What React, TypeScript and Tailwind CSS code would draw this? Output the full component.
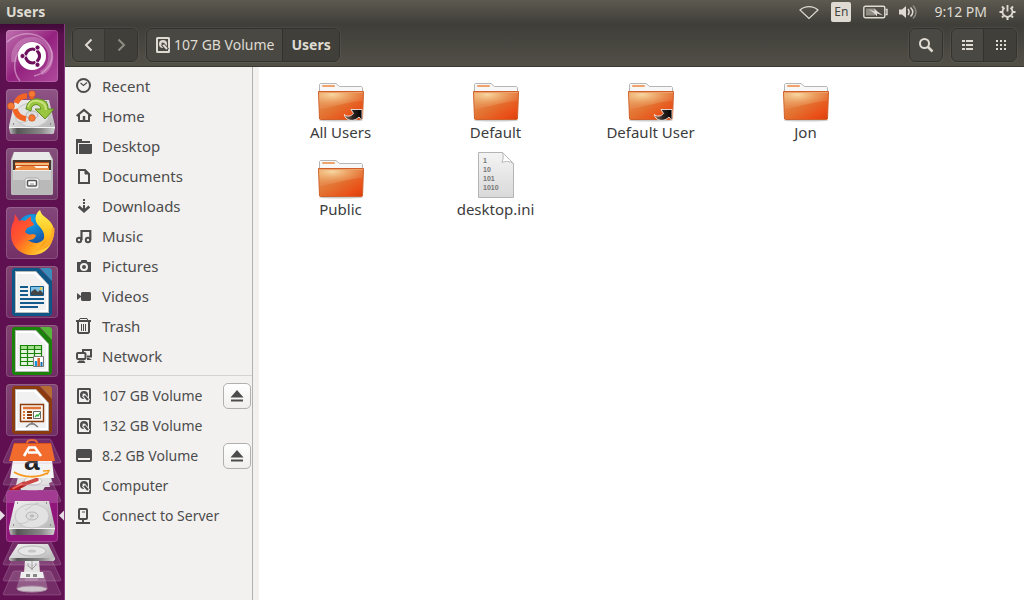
import type { ReactNode } from 'react'

interface IconProps {
  children: ReactNode
  className?: string
}

// 16px symbolic icon, inherits the text colour
function Symbolic({ children, className = 'h-4 w-4' }: IconProps) {
  return (
    <svg viewBox="0 0 16 16" fill="none" stroke="currentColor" strokeWidth="2" className={`shrink-0 ${className}`} aria-hidden="true">
      {children}
    </svg>
  )
}

function DriveIcon({ background }: { background: string }) {
  return (
    <Symbolic>
      <rect x="2" y="1" width="12" height="14" rx=".5" />
      <circle cx="8" cy="7" r="4" fill="currentColor" stroke="none" />
      <path d="M7.500 7l5 6" stroke={background} strokeWidth="4" />
      <path d="M8 7.500l4 4.500" strokeWidth="2" />
      <circle cx="7.700" cy="6.800" r="1.200" fill={background} stroke="none" />
    </Symbolic>
  )
}

const places = [
  {
    label: 'Recent',
    icon: (
      <Symbolic>
        <circle cx="7.500" cy="7.500" r="6.500" />
        <path d="M4.500 5l3 2.500L11 4.500" strokeWidth="1.200" />
      </Symbolic>
    ),
  },
  {
    label: 'Home',
    icon: (
      <Symbolic>
        <path d="M.7 8L8 1.900 15.300 8" strokeWidth="2.200" />
        <path d="M3 7v6h10V7" />
        <path d="M8 8v5" strokeWidth="2.500" />
      </Symbolic>
    ),
  },
  {
    label: 'Desktop',
    icon: (
      <Symbolic>
        <path d="M0 1h6v2h8v2H2v11H0z" fill="currentColor" stroke="none" />
        <path d="M3 6h13v9l-1 1H3z" fill="currentColor" stroke="none" />
      </Symbolic>
    ),
  },
  {
    label: 'Documents',
    icon: (
      <Symbolic>
        <path d="M3 2h6l4 4v9H3z" />
        <path d="M9 2v4h4" fill="currentColor" strokeWidth="1" />
      </Symbolic>
    ),
  },
  {
    label: 'Downloads',
    icon: (
      <Symbolic>
        <path d="M8 1v2M8 4v2M8 7v6" />
        <path d="M2.700 8.500L8 13.300l5.300-4.800" strokeWidth="2.600" />
      </Symbolic>
    ),
  },
  {
    label: 'Music',
    icon: (
      <Symbolic>
        <circle cx="3" cy="12" r="2.200" />
        <circle cx="12" cy="12" r="2.200" />
        <path d="M5.500 12V3H14.300v9" strokeWidth="2.200" />
      </Symbolic>
    ),
  },
  {
    label: 'Pictures',
    icon: (
      <Symbolic>
        <path fillRule="evenodd" d="M5.500 2h5l1 2H15v10H1V4h3.500zM8 5a4 4 0 1 0 0 8 4 4 0 0 0 0-8z" fill="currentColor" stroke="none" />
        <circle cx="8" cy="9" r="2" fill="currentColor" stroke="none" />
      </Symbolic>
    ),
  },
  {
    label: 'Videos',
    icon: (
      <Symbolic>
        <path d="M6 4h8l1 1v7l-1 1H6l-1-1V9l-4 3V5l4 3V5z" fill="currentColor" stroke="none" />
      </Symbolic>
    ),
  },
  {
    label: 'Trash',
    icon: (
      <Symbolic>
        <path d="M0 3h15" />
        <path d="M3 2.500l1-2h7l1 2" strokeWidth="1" />
        <path d="M2 4v10l1 1h9l1-1V4" />
        <path d="M5.500 6v7M7.500 6v7M9.500 6v7" strokeWidth="1" />
      </Symbolic>
    ),
  },
  {
    label: 'Network',
    icon: (
      <Symbolic>
        <rect x="1" y="5" width="8.500" height="6" rx="1" />
        <path d="M7 4V2h8v6.500h-4" />
        <path d="M3 12.500h5l1.500 2.500H1zM11 10h2l3 2h-5z" fill="currentColor" stroke="none" />
      </Symbolic>
    ),
  },
]

const driveIcon = <DriveIcon background="#f2f1f0" />

const devices = [
  { label: '107 GB Volume', icon: driveIcon, ejectable: true },
  { label: '132 GB Volume', icon: driveIcon, ejectable: false },
  {
    label: '8.2 GB Volume',
    icon: (
      <Symbolic>
        <rect x="0" y="1" width="16" height="13" rx="2" fill="currentColor" stroke="none" />
        <path d="M2 11h12" stroke="#f2f1f0" />
      </Symbolic>
    ),
    ejectable: true,
  },
  { label: 'Computer', icon: driveIcon, ejectable: false },
  {
    label: 'Connect to Server',
    icon: (
      <Symbolic>
        <rect x="3" y="1" width="8" height="10" rx="1" />
        <path d="M7 11v4M0 15h14" />
        <path d="M6 4h3" strokeWidth="1" />
      </Symbolic>
    ),
    ejectable: false,
  },
]

const files = [
  { name: 'All Users', kind: 'link' },
  { name: 'Default', kind: 'folder' },
  { name: 'Default User', kind: 'link' },
  { name: 'Jon', kind: 'folder' },
  { name: 'Public', kind: 'folder' },
  { name: 'desktop.ini', kind: 'binary' },
]

function Gradients() {
  return (
    <svg className="absolute h-0 w-0" aria-hidden="true">
      <defs>
        <linearGradient id="folder" x1="0" y1="0" x2="1" y2="1">
          <stop offset="0" stopColor="#e69a5a" />
          <stop offset=".5" stopColor="#e3702f" />
          <stop offset=".8" stopColor="#ea4f17" />
          <stop offset="1" stopColor="#d8400f" />
        </linearGradient>
        <radialGradient id="folderGlow" cx=".3" cy=".15" r=".75">
          <stop offset="0" stopColor="#f6d49b" />
          <stop offset="1" stopColor="#f0a050" stopOpacity="0" />
        </radialGradient>
        <linearGradient id="paper" x1="0" y1="0" x2="0" y2="1">
          <stop offset="0" stopColor="#f4f4f4" />
          <stop offset="1" stopColor="#d9d9d9" />
        </linearGradient>
        <linearGradient id="linkArrow" x1="0" y1="0" x2="1" y2="0">
          <stop offset="0" stopColor="#8d7366" />
          <stop offset=".5" stopColor="#2a2320" />
          <stop offset="1" stopColor="#000" />
        </linearGradient>
        <linearGradient id="metal" x1="0" y1="0" x2="1" y2="1">
          <stop offset="0" stopColor="#f3f3f3" />
          <stop offset=".6" stopColor="#d0d0d0" />
          <stop offset="1" stopColor="#b4b4b4" />
        </linearGradient>
        <linearGradient id="diskFront" x1="0" y1="0" x2="1" y2="0">
          <stop offset="0" stopColor="#c2c2c2" />
          <stop offset=".18" stopColor="#555" />
          <stop offset=".7" stopColor="#8a8a8a" />
          <stop offset="1" stopColor="#d0d0d0" />
        </linearGradient>
        <linearGradient id="fox" x1=".1" y1=".1" x2=".9" y2=".8">
          <stop offset="0" stopColor="#ff3d3a" />
          <stop offset=".4" stopColor="#ff5a2c" />
          <stop offset=".7" stopColor="#ff9a1b" />
          <stop offset="1" stopColor="#ffd43a" />
        </linearGradient>
        <linearGradient id="foxTail" x1="0" y1="0" x2="0" y2="1">
          <stop offset="0" stopColor="#fff251" />
          <stop offset=".6" stopColor="#ffc21f" />
          <stop offset="1" stopColor="#ff8a12" />
        </linearGradient>
        <radialGradient id="globe" cx=".4" cy=".2" r=".9">
          <stop offset="0" stopColor="#12a8ee" />
          <stop offset="1" stopColor="#173a90" />
        </radialGradient>
      </defs>
    </svg>
  )
}

function FileIcon({ kind }: { kind: string }) {
  if (kind === 'binary') {
    return (
      <svg viewBox="0 0 48 48" className="h-12 w-12" aria-hidden="true">
        <path d="M6.500 1.500h24l11 11v34h-35z" fill="url(#paper)" stroke="#b4b4b4" />
        <path d="M30.500 1.500c1 3 1 6-.5 10 4-1.500 7-1.500 11.500 1z" fill="#fff" stroke="#b8b8b8" />
        <g fill="#777" fontFamily="Liberation Sans, sans-serif" fontSize="7" fontWeight="700">
          <text x="11" y="12">1</text>
          <text x="11" y="21">10</text>
          <text x="11" y="30">101</text>
          <text x="11" y="39">1010</text>
        </g>
      </svg>
    )
  }
  return (
    <svg viewBox="0 0 48 48" className="h-12 w-12" aria-hidden="true">
      <ellipse cx="24" cy="46.500" rx="22" ry="1" fill="#000" opacity=".2" />
      <path d="M2.500 19V10.500l1-1H19l3.500 3h22l1 1V19z" fill="#f7f7f7" stroke="#b5b5b5" />
      <rect x="5" y="11" width="13" height="2" rx="1" fill="#f0a26c" />
      <path d="M1.500 17.500h45l-1 27.500-1 .5h-41l-1-.5z" fill="url(#folder)" stroke="#cf6029" />
      <path d="M2 18h44l-.4 9C34 27 18 33 2.600 35z" fill="url(#folderGlow)" />
      <path d="M2 18h44l-.4 9C34 27 18 33 2.600 35z" fill="#fff" opacity=".08" />
      <path d="M2 18.500h44" stroke="#eea06a" />
      {kind === 'link' && (
        <path d="M34 35.500h11v11l-3-3.500c-4 4-9.500 4.500-13 1-1-1-1.500-2.300-1.700-3.500 3 2.600 6.500 2 9.200-1z" fill="url(#linkArrow)" stroke="#fff" strokeWidth=".8" />
      )}
    </svg>
  )
}

function HardDisk() {
  return (
    <g>
      <path d="M9 11h34l6 26v3H3v-3z" fill="url(#metal)" />
      <path d="M3 38h46l-1 6-1 1H5l-1-1z" fill="url(#diskFront)" />
      <path d="M3 38.500h46" stroke="#f5f5f5" />
      <ellipse cx="26" cy="26" rx="17" ry="12" fill="#e2e2e2" stroke="#bdbdbd" strokeWidth=".8" />
      <ellipse cx="26" cy="26" rx="6" ry="4" fill="#ddd" stroke="#aaa" strokeWidth=".8" />
      <ellipse cx="26" cy="26" rx="2" ry="1.400" fill="#b5b5b5" />
      <path d="M12 33c6 2 12-2 14-7M33 13c-8 1-8 5-14 7" fill="none" stroke="#c6c6c6" />
      <path d="M7 35h1M44 35h1M11 13h1M40 13h1M7 41h1" stroke="#777" strokeWidth="1.500" />
    </g>
  )
}

// document with a cut corner, shared by the office launchers
function OfficePage({ color, corner, children }: { color: string; corner: string; children: ReactNode }) {
  return (
    <g>
      <path d="M8 2h25l13 13v33l-2 2H8l-2-2V4z" fill={color} />
      <path d="M34 2h10l2 2v11z" fill={corner} />
      <path d="M9 5h21l13 14v28H9z" fill="#b9b9b9" />
      <path d="M10 6h20l12 13v27H10z" fill="#fff" />
      <path d="M11 8h17l12 12v24H11z" fill="#f1f1f1" />
      {children}
    </g>
  )
}

const launchers = [
  {
    label: 'Search your computer',
    tile: 'bg-linear-to-br from-[#c070b0] via-[#94217f] to-[#b04a9e]',
    art: (
      <g>
        <path d="M8 32C5 14 24 2 39 14c10 9 6 25-4 29" fill="none" stroke="#d6a0cd" strokeWidth="5" opacity=".45" />
        <path d="M1 12C16-2 42 2 46 24c1 11-8 20-18 22M14 51C5 40 8 24 18 16" fill="none" stroke="#e5c0df" strokeWidth="1.500" opacity=".55" />
        <circle cx="26" cy="26" r="14" fill="#fff" />
        <circle cx="26.500" cy="26" r="7" fill="none" stroke="#6d0f5c" strokeWidth="3.200" />
        <path d="M26.500 26L16 26M26.500 26l6-10M26.500 26l6 10" stroke="#fff" strokeWidth="1.200" />
        <g fill="#6d0f5c" stroke="#fff" strokeWidth=".8">
          <circle cx="16.500" cy="26" r="2.500" />
          <circle cx="31.500" cy="17.500" r="2.500" />
          <circle cx="31.500" cy="34.800" r="2.500" />
        </g>
        <circle cx="26.500" cy="26" r="5" fill="#fff" />
      </g>
    ),
  },
  {
    label: 'Install Ubuntu',
    tile: 'bg-linear-to-b from-[#905486] to-[#743169]',
    art: (
      <g>
        <HardDisk />
        <g fill="none" stroke="#f26424" strokeWidth="5.500">
          <path d="M10 14c2-5 6-7 11-7M9 20c1 5 5 9 11 10M24 7l4 1" />
        </g>
        <g fill="#f57a35" stroke="#c84312" strokeWidth=".5">
          <circle cx="5" cy="17" r="3.500" />
          <circle cx="26" cy="5" r="3.300" />
          <circle cx="26" cy="29" r="3.300" />
        </g>
        <path d="M20 20c1-8 7-11 13-10 7 1 9 4 9 10h6L39 30 29 20h6c-1-4-4-5-7-4-2 1-3 3-3 6z" fill="#9ac53f" stroke="#5e8d1d" />
        <path d="M22 18c1-5 5-7 10-6 6 1 8 4 8 9" fill="none" stroke="#c8e37d" strokeWidth="2" />
      </g>
    ),
  },
  {
    label: 'Files',
    tile: 'bg-linear-to-b from-[#85507c] to-[#6d3364]',
    art: (
      <g>
        <path d="M8 4h35l4 7v35l-1 1H6l-1-1V11z" fill="#bababa" />
        <path d="M8 4h35l3 8H6z" fill="#e9e9e9" />
        <path d="M7 12h38v11H7z" fill="#47382f" />
        <path d="M9 14h34v8H9z" fill="#c64d16" />
        <path d="M9 15h34v2H9z" fill="#f4bb7b" />
        <path d="M10 18h32v2H10z" fill="#fff1dd" />
        <path d="M16 18h12l2 2h13v3H9v-2z" fill="#ee8d42" />
        <path d="M7 22h38v25H7z" fill="#b9b9b9" />
        <path d="M7 22h38v10H7z" fill="#cfcfcf" />
        <path d="M7 22.500h38" stroke="#eee" />
        <rect x="19" y="30" width="14" height="11" rx="2" fill="#f1f1f1" stroke="#aaa" />
        <rect x="21.500" y="32.500" width="9" height="5.500" rx="1" fill="#fff" stroke="#555" strokeWidth="1.500" />
        <path d="M24 36h4" stroke="#888" strokeWidth="1" />
      </g>
    ),
  },
  {
    label: 'Firefox Web Browser',
    tile: 'bg-linear-to-b from-[#84477a] to-[#733068]',
    art: (
      <g>
        <circle cx="27" cy="24" r="17" fill="url(#globe)" />
        <path d="M9 7l4 7c2-1 4-1 6 0l6-5v5c2 1 3 3 3 4l-7 3-2 4c2 2 4 3 8 2l3 1c-1 4-4 5-8 5 6 5 14 4 18-4 2-5 1-9-2-13-3 3-4 2-4-2 4-2-5-8-1-10 1 5 14 8 14 23 0 14-10 21-21 21S5 40 5 27c0-6 1-10 3-13z" fill="url(#fox)" />
        <path d="M34 3c-5 4-6 10-2 15 5 5 8 9 5 17-2 4-5 7-8 8 10 1 19-6 19-17 0-9-4-12-9-16-3-2-4-4-5-7z" fill="url(#foxTail)" />
        <path d="M47 21c1 11-7 20-18 22" fill="none" stroke="#ffac2b" strokeWidth="3" />
      </g>
    ),
  },
  {
    label: 'LibreOffice Writer',
    tile: 'bg-linear-to-b from-[#80446f] to-[#6f2b64]',
    art: (
      <OfficePage color="#0e5685" corner="#3c8cbb">
        <path d="M14 21h8M14 25h8M14 29h8M14 33h24M14 37h24M14 41h18" stroke="#125c8d" strokeWidth="2" />
        <path d="M24.500 20.500h13v9h-13z" fill="#7cc2e8" stroke="#125c8d" />
        <path d="M25 29v-3l4-3 3 3 2-2 3 3v2z" fill="#454545" />
        <circle cx="35" cy="22.500" r="1.500" fill="#e8c84b" />
      </OfficePage>
    ),
  },
  {
    label: 'LibreOffice Calc',
    tile: 'bg-linear-to-b from-[#81446f] to-[#702c64]',
    art: (
      <OfficePage color="#1a8109" corner="#55b637">
        <path d="M14 20h22v21H14z" fill="#e4f4df" />
        <path d="M14 20h22v5H14z" fill="#a2e18c" />
        <path d="M14.500 20.500h21v20h-21zM14 24.500h22M14 28.500h22M14 32.500h22M14 36.500h22M21.500 20v21M28.500 20v21" fill="none" stroke="#1a8109" strokeWidth="1.200" />
        <path d="M27.500 31.500h10v10h-10z" fill="#fff" stroke="#777" />
        <path d="M30 36v5" stroke="#1596dc" strokeWidth="2.500" />
        <path d="M32.700 33v8" stroke="#dc6327" strokeWidth="2.500" />
        <path d="M35.500 37v4" stroke="#1b72ad" strokeWidth="2" />
      </OfficePage>
    ),
  },
  {
    label: 'LibreOffice Impress',
    tile: 'bg-linear-to-b from-[#824572] to-[#702d66]',
    art: (
      <OfficePage color="#8b3b0d" corner="#b56b31">
        <path d="M14.500 20.500h23v17h-23z" fill="#fdf5ee" stroke="#8b3b0d" strokeWidth="1.400" />
        <path d="M17 24h18" stroke="#df743a" strokeWidth="2.500" />
        <path d="M17 28h2M17 31h2M17 34h2" stroke="#df743a" strokeWidth="2" />
        <path d="M21 28h5M21 31h5M21 34h5" stroke="#8b3b0d" strokeWidth="2" />
        <path d="M27.500 27.500h7v7h-7z" fill="#fff" stroke="#666" />
        <path d="M29 33l2-2 1 1 2-3" fill="none" stroke="#2ba63b" strokeWidth="1.300" />
        <path d="M26 38v2M20 43l4-3h4l4 3" fill="none" stroke="#777" strokeWidth="1.500" />
      </OfficePage>
    ),
  },
]

const foldedTile = <path d="M15 1h34l2 1 10 22-1 1H4l-1-1L13 2z" fill="#fff" fillOpacity=".12" stroke="#c79cc0" strokeOpacity=".3" />

// launchers that are folded at the lower end of the bar
const folded = [
  {
    label: 'Ubuntu Software',
    className: 'z-30 h-[22px]',
    art: (
      <g>
        {foldedTile}
        <path d="M27 5c0-4 10-4 10 0" fill="none" stroke="#e5693a" strokeWidth="2" />
        <path d="M14 5h37l4 18H9z" fill="#f16b2c" />
        <path d="M14 5h37v1H14z" fill="#d85318" />
        <path d="M24 18l5-8.500h6l6 8.500M28 14.500h10" fill="none" stroke="#fff" strokeWidth="2.600" />
      </g>
    ),
  },
  {
    label: 'Amazon',
    className: 'z-20 h-[17px]',
    art: (
      <g>
        {foldedTile}
        <path d="M13 0h39l2 18H10z" fill="#f3f3f3" />
        <text x="24" y="10" fontFamily="Liberation Sans, sans-serif" fontSize="28" fontWeight="700" fill="#222">a</text>
        <path d="M14 12c10 6 24 6 33 1" fill="none" stroke="#f79a1d" strokeWidth="2" />
        <path d="M43 11l6-.5-2 4" fill="none" stroke="#f79a1d" strokeWidth="1.500" />
      </g>
    ),
  },
  {
    label: 'System Settings',
    className: 'z-10 h-[13px]',
    art: (
      <g>
        {foldedTile}
        <path d="M18 0h33l1 5-3 1 1 4h-5l-2 3h-5l-1 2h-9l-1-2h-6l-2-5h-3z" fill="#dedede" />
        <ellipse cx="33" cy="4" rx="9" ry="4" fill="#f2f2f2" stroke="#bbb" />
        <path d="M12 13l12-6" stroke="#b81e1d" strokeWidth="5" strokeLinecap="round" />
        <path d="M23 7.500l14-5" stroke="#c42f2b" strokeWidth="3.500" strokeLinecap="round" />
        <path d="M13 11.500l9-4.500" stroke="#ec6761" strokeWidth="1.500" strokeLinecap="round" />
      </g>
    ),
  },
  {
    label: '107 GB Volume',
    className: 'z-40 h-[50px]',
    art: (
      <g>
        <rect x="6.500" y=".5" width="51" height="51" rx="3" fill="#91167c" stroke="#b25aa5" strokeOpacity=".7" />
        <path d="M7 3q0-2 2-2h46q2 0 2 2v10H7z" fill="#fff" opacity=".16" />
        <g transform="translate(6 0)">
          <HardDisk />
        </g>
        <path d="M0 20.500l5 5-5 5zM64 20.500l-5 5 5 5z" fill="#e6dfe4" />
      </g>
    ),
  },
  {
    label: '132 GB Volume',
    className: 'z-30 h-[16px]',
    art: (
      <g>
        {foldedTile}
        <path d="M18 4h30l7 14v2H9v-2z" fill="url(#metal)" />
        <ellipse cx="32" cy="11" rx="14" ry="5" fill="#e6e6e6" stroke="#b8b8b8" />
        <ellipse cx="32" cy="11" rx="4" ry="1.500" fill="#c6c6c6" />
        <path d="M9 18h46l-1 3H10z" fill="url(#diskFront)" />
      </g>
    ),
  },
  {
    label: '8.2 GB Volume',
    className: 'z-20 h-[14px]',
    art: (
      <g>
        {foldedTile}
        <path d="M25 4h14l1 13H24z" fill="#e3e3e3" />
        <path d="M32 4v10M28 7v3l4 3 4-4V7" fill="none" stroke="#999" />
        <path d="M21 16h22l1 6H20z" fill="#efefef" />
        <path d="M26 18h4v3h-4zM33 18h4v3h-4z" fill="#888" />
      </g>
    ),
  },
  {
    label: 'Computer',
    className: 'z-10 h-[26px]',
    art: (
      <g>
        {foldedTile}
        <path d="M21 4h23l4 15H16z" fill="#fff" opacity=".22" />
        <path d="M25 3h13v8H25z" fill="#fff" opacity=".16" />
        <ellipse cx="32" cy="19" rx="15" ry="3" fill="#cfc4cc" stroke="#a88ca4" />
      </g>
    ),
  },
]

function TopBar() {
  return (
    <header className="flex h-6 shrink-0 items-center justify-between bg-linear-to-b from-[#5d5a50] to-[#3f3e39] pr-2 pl-1.5 text-[#dfdbd2]">
      <h1 className="text-sm font-bold">Users</h1>
      <div className="flex items-center">
        <button type="button" aria-label="Network" className="mr-3">
          <svg viewBox="0 0 20 16" className="h-4 w-5" fill="none" stroke="currentColor" strokeWidth="1.200">
            <path d="M1 6C6 1.500 14 1.500 19 6l-9 8.500z" />
          </svg>
        </button>
        <button type="button" className="mr-3 flex h-5 w-5 items-center justify-center rounded-xs bg-[#dfdbd2] text-xs text-[#45443f]">
          En
        </button>
        <button type="button" aria-label="Battery" className="mr-2.5">
          <svg viewBox="0 0 25 14" className="h-3.5 w-[25px]" fill="none" stroke="currentColor" strokeWidth="1.400">
            <rect x=".8" y="1.200" width="21" height="11.500" rx="1.500" />
            <path d="M22.500 4.500H24v5h-1.500" />
            <path d="M3 3.500h9v7H3z" fill="#8f8c84" stroke="none" />
            <path d="M5.500 4l6 2.500V3.500l3 3V3.500l0 3 5.500 4-6-2v3l-3-3.500z" fill="currentColor" stroke="none" />
          </svg>
        </button>
        <button type="button" aria-label="Sound" className="mr-4">
          <svg viewBox="0 0 20 16" className="h-4 w-5" fill="none" stroke="currentColor" strokeWidth="1.500">
            <path d="M1 5.500h3l4-3.500v12L4 10.500H1z" fill="currentColor" stroke="none" />
            <path d="M10 5c1.500 2 1.500 4 0 6" />
            <path d="M12.500 3.500c3 3 3 6 0 9" />
            <path d="M15 1.500c4 4 4 9 0 13" opacity=".45" />
          </svg>
        </button>
        <time className="mr-3 text-sm">9:12 PM</time>
        <button type="button" aria-label="System">
          <svg viewBox="0 0 17 16" className="h-4 w-[17px]" fill="none" stroke="currentColor">
            <path d="M5.500 3.800a5 5 0 1 0 6 0" strokeWidth="1.800" />
            <path d="M8.500 1v6.500" strokeWidth="1.800" />
            <path d="M.5 8h3M13.500 8h3M8.500 13v3M3 2.500l1.500 1.500M14 2.500L12.500 4M3 13.500L4.500 12M14 13.500L12.500 12" strokeWidth="2" />
          </svg>
        </button>
      </div>
    </header>
  )
}

function Launcher() {
  return (
    <nav aria-label="Launcher" className="w-[65px] shrink-0 border-r border-[#873c7b] bg-linear-to-b from-[#3f0937] via-[#5d104f] via-2% to-[#611052] pt-1.5">
      <div className="flex flex-col items-center gap-[7px]">
        {launchers.map(({ label, tile, art }) => (
          <button key={label} type="button" aria-label={label} className={`h-[52px] w-[52px] rounded-sm inset-ring inset-ring-white/15 ${tile}`}>
            <svg viewBox="0 0 52 52" className="h-full w-full">
              {art}
            </svg>
          </button>
        ))}
      </div>
      <div className="mt-0.5 flex flex-col">
        {folded.map(({ label, art, className }) => (
          <button key={label} type="button" aria-label={label} className={`relative w-16 ${className}`}>
            <svg viewBox="0 0 64 52" className="block h-[52px] w-16 overflow-visible">
              {art}
            </svg>
          </button>
        ))}
      </div>
    </nav>
  )
}

const buttonGroup = 'flex h-[34px] overflow-hidden rounded-md border border-[#33322e] bg-[#4a4842] shadow-[0_0_0_1px_rgba(255,255,255,0.05)]'

function Toolbar() {
  return (
    <div className="flex h-[43px] shrink-0 items-center border-b border-[#3a3833] bg-linear-to-b from-[#3f3e39] to-[#524f47] px-[7px] text-[#dfdbd2]">
      <div className={buttonGroup}>
        <button type="button" aria-label="Back" className="flex w-8 items-center justify-center border-r border-[#383733]">
          <Symbolic>
            <path d="M10.500 2.500L5 8l5.500 5.500" />
          </Symbolic>
        </button>
        <button type="button" aria-label="Forward" className="flex w-8 items-center justify-center bg-[#403f3a] text-[#8f8c84]">
          <Symbolic>
            <path d="M5.500 2.500L11 8l-5.500 5.500" />
          </Symbolic>
        </button>
      </div>
      <div className={`ml-2 ${buttonGroup}`}>
        <button type="button" className="flex items-center gap-[3px] border-r border-[#33322e] px-2 text-sm">
          <DriveIcon background="#4a4842" />
          107 GB Volume
        </button>
        <button type="button" className="bg-[#403f3a] px-2 text-sm font-bold">
          Users
        </button>
      </div>
      <div className={`ml-auto ${buttonGroup}`}>
        <button type="button" aria-label="Search" className="flex w-8 items-center justify-center">
          <Symbolic>
            <circle cx="6.500" cy="6.500" r="4.500" />
            <path d="M10 10l4.500 4.500" strokeWidth="2.500" />
          </Symbolic>
        </button>
      </div>
      <div className={`ml-2 ${buttonGroup}`}>
        <button type="button" aria-label="List view" className="flex w-8 items-center justify-center border-r border-[#33322e]">
          <Symbolic>
            <path d="M2 4h3M6 4h7M2 8h3M6 8h7M2 12h3M6 12h7" />
          </Symbolic>
        </button>
        <button type="button" aria-label="Icon view" className="flex w-8 items-center justify-center bg-[#403f3a]">
          <Symbolic>
            <path d="M4 4h2M8 4h2M12 4h2M4 8h2M8 8h2M12 8h2M4 12h2M8 12h2M12 12h2" />
          </Symbolic>
        </button>
      </div>
    </div>
  )
}

function Place({ label, icon }: { label: string; icon: ReactNode }) {
  return (
    <a href="#" className="flex h-full flex-1 items-center gap-2.5 pl-[11px]">
      {icon}
      {label}
    </a>
  )
}

function Sidebar() {
  return (
    <aside className="w-[188px] shrink-0 border-r border-[#b3b1ae] text-[#4c4c4c]">
      <ul className="border-b border-[#d5d3d1] py-1 text-[15px]">
        {places.map((place) => (
          <li key={place.label} className="flex h-[30px] items-center">
            <Place {...place} />
          </li>
        ))}
      </ul>
      <ul className="py-[5px] text-sm">
        {devices.map(({ label, icon, ejectable }) => (
          <li key={label} className="flex h-[30px] items-center">
            <Place label={label} icon={icon} />
            {ejectable && (
              <button type="button" aria-label={`Eject ${label}`} className="mr-px flex h-[26px] w-7 items-center justify-center rounded-[5px] border border-[#b2b0ad] bg-linear-to-b from-white to-[#f0efee]">
                <svg viewBox="0 0 14 12" className="h-3 w-3.5" fill="currentColor">
                  <path d="M7 0l6.500 7.500H.5zM1 9.500h12v2H1z" />
                </svg>
              </button>
            )}
          </li>
        ))}
      </ul>
    </aside>
  )
}

export default function App() {
  return (
    <div className="flex min-h-screen flex-col bg-[#f2f1f0] font-['Noto_Sans',sans-serif]">
      <Gradients />
      <TopBar />
      <div className="flex flex-1">
        <Launcher />
        <div className="flex min-w-0 flex-1 flex-col">
          <Toolbar />
          <div className="flex flex-1">
            <Sidebar />
            <main className="ml-1.5 flex-1 bg-white pt-[7px] pl-1">
              <ul className="flex flex-wrap">
                {files.map(({ name, kind }) => (
                  <li key={name} className="h-[77px] w-[155px]">
                    <button type="button" className="flex w-full flex-col items-center text-[15px] leading-5 text-[#3c3c3c]">
                      <FileIcon kind={kind} />
                      {name}
                    </button>
                  </li>
                ))}
              </ul>
            </main>
          </div>
        </div>
      </div>
    </div>
  )
}
